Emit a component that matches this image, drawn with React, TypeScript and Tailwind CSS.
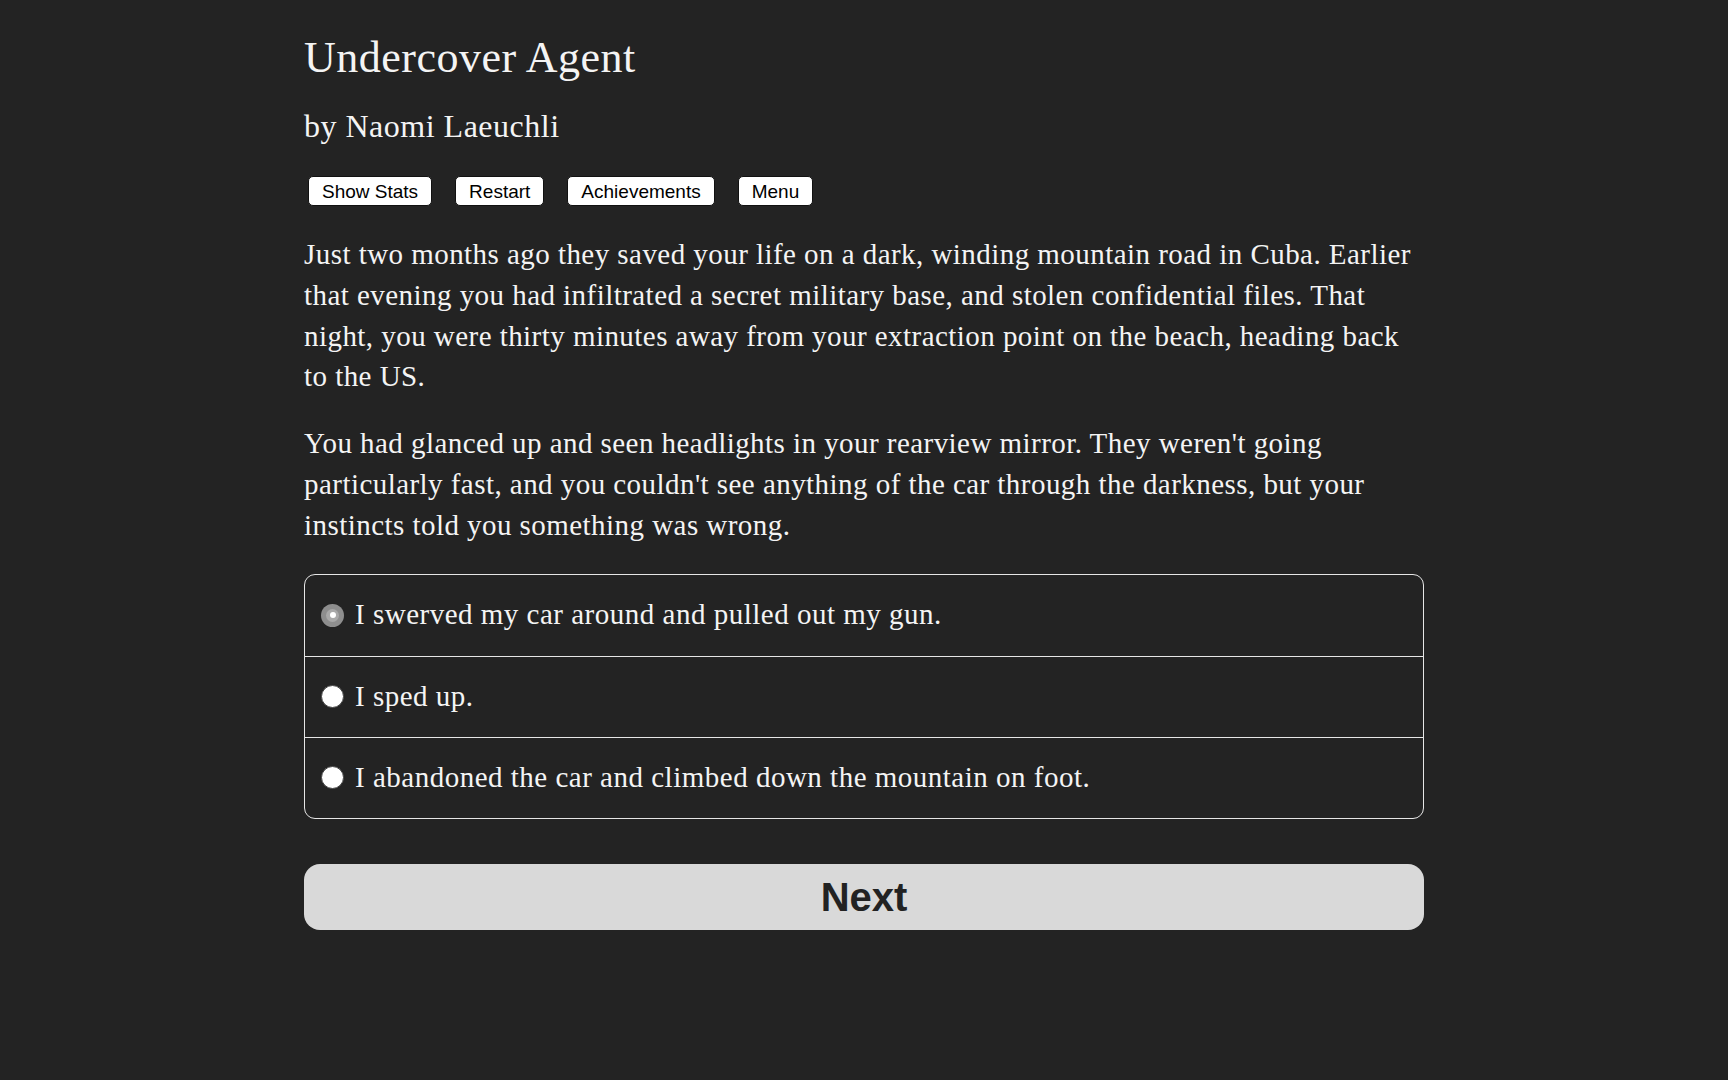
import React from "react";

const serif = "font-['Liberation_Serif',serif]";
const sans = "font-['Liberation_Sans',Arial,sans-serif]";

const para1 = [
  "Just two months ago they saved your life on a dark, winding mountain road in Cuba. Earlier",
  "that evening you had infiltrated a secret military base, and stolen confidential files. That",
  "night, you were thirty minutes away from your extraction point on the beach, heading back",
  "to the US.",
];

const para2 = [
  "You had glanced up and seen headlights in your rearview mirror. They weren't going",
  "particularly fast, and you couldn't see anything of the car through the darkness, but your",
  "instincts told you something was wrong.",
];

const choices = [
  "I swerved my car around and pulled out my gun.",
  "I sped up.",
  "I abandoned the car and climbed down the mountain on foot.",
];

function Radio({ checked }: { checked: boolean }) {
  if (checked) {
    return (
      <span className="flex h-[23px] w-[23px] shrink-0 items-center justify-center rounded-full bg-[#8e8e8e]">
        <span className="flex h-[13px] w-[13px] items-center justify-center rounded-full bg-[#a9a9a9]">
          <span className="h-[6px] w-[6px] rounded-full bg-white" />
        </span>
      </span>
    );
  }
  return (
    <span className="h-[23px] w-[23px] shrink-0 rounded-full border border-[#444] bg-white" />
  );
}

export default function App() {
  const selected = 0;
  return (
    <div className={`min-h-[1080px] bg-[#232323] text-[#f4f4f4] ${serif}`}>
      <div className="mx-auto w-[1120px] pt-[32px]">
        <h1 className="text-[44px] leading-[52px] tracking-[0.5px]">Undercover Agent</h1>
        <h2 className="mt-[22px] text-[32px] leading-[40px] tracking-[0.5px]">
          by Naomi Laeuchli
        </h2>

        <div className={`mt-[30px] flex gap-[23px] pl-[4px] ${sans}`}>
          {["Show Stats", "Restart", "Achievements", "Menu"].map((b) => (
            <button
              key={b}
              className="h-[30px] rounded-[5px] border border-[#111] bg-white px-[13px] text-[19px] leading-none text-black"
            >
              {b}
            </button>
          ))}
        </div>

        <div className="mt-[28px] text-[29px] leading-[40.8px] tracking-[0.45px]">
          {para1.map((l) => (
            <div key={l} className="whitespace-nowrap">
              {l}
            </div>
          ))}
        </div>
        <div className="mt-[26px] text-[29px] leading-[40.8px] tracking-[0.45px]">
          {para2.map((l) => (
            <div key={l} className="whitespace-nowrap">
              {l}
            </div>
          ))}
        </div>

        <div className="mt-[28px] overflow-hidden rounded-[11px] border border-[#e6e6e6]">
          {choices.map((c, i) => (
            <label
              key={c}
              className={`flex h-[81px] items-center gap-[11px] pl-[16px] text-[29px] tracking-[0.5px] ${
                i > 0 ? "border-t border-[#e6e6e6]" : ""
              }`}
            >
              <Radio checked={i === selected} />
              <span>{c}</span>
            </label>
          ))}
        </div>

        <button
          className={`mt-[45px] h-[66px] w-full rounded-[16px] bg-[#d9d9d9] text-[40px] font-bold text-[#222] ${sans}`}
        >
          Next
        </button>
      </div>
    </div>
  );
}
